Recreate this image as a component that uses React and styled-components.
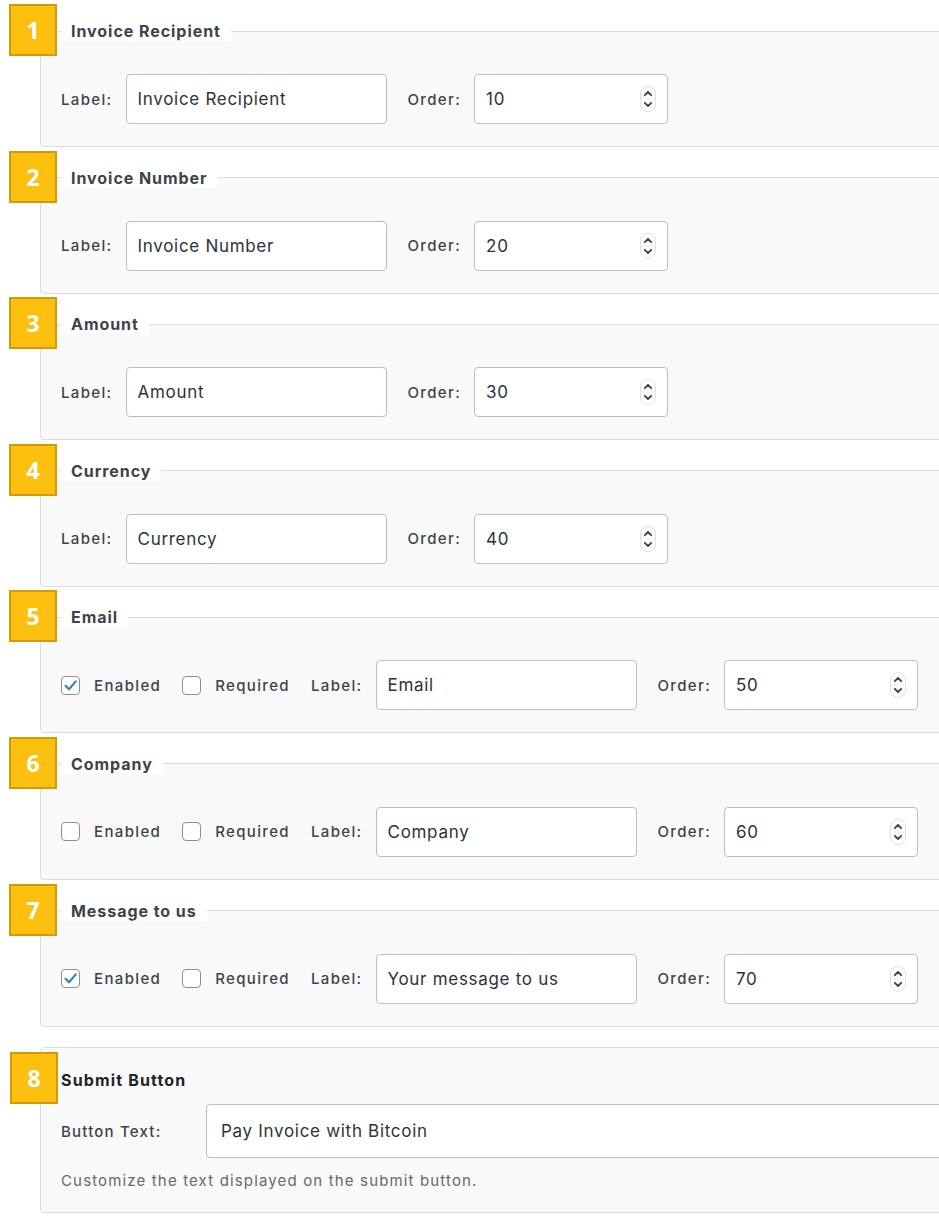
import React from 'react';
import styled, { createGlobalStyle } from 'styled-components';

const GlobalStyle = createGlobalStyle`
  html, body { margin: 0; padding: 0; background: #fff; overflow-x: hidden; }
  body {
    font-family: Inter, "Noto Sans", "Liberation Sans", sans-serif;
    color: #3c434a;
    -webkit-font-smoothing: antialiased;
  }
  * { box-sizing: border-box; }
`;

const Page = styled.div`
  padding: 21px 0 20px 40px;
  width: 939px;
`;

const Section = styled.div`
  position: relative;
  margin-right: -40px;
  margin-bottom: 20.6px;
`;

const Badge = styled.div`
  position: absolute;
  left: -31px;
  top: ${(p) => p.$top}px;
  width: 48px;
  height: 52px;
  background: #fdc00f;
  border: 2px solid #cf9c06;
  color: #fff;
  font-family: "Open Sans", "Noto Sans", sans-serif;
  font-weight: 700;
  font-size: 23px;
  display: flex;
  align-items: center;
  justify-content: center;
  z-index: 2;
`;

const Fieldset = styled.fieldset`
  margin: 0;
  min-width: 0;
  padding: 0 20px 22px;
  border: 1px solid #dcdcde;
  border-radius: 4px;
  background: #f9f9f9;
`;

const Legend = styled.legend`
  padding: 0 10px;
  margin: 0;
  background: #fff;
  font-size: 16px;
  font-weight: 700;
  letter-spacing: 0.95px;
  line-height: 20px;
  color: #3c434a;
`;

const Row = styled.div`
  display: flex;
  align-items: center;
  gap: 21px;
  height: 50px;
  margin-top: 33px;
`;

const Field = styled.label`
  display: flex;
  align-items: center;
  gap: ${(p) => p.$gap || 13}px;
`;

const LabelText = styled.span`
  font-size: 15px;
  font-weight: 500;
  letter-spacing: 1.35px;
  color: #3c434a;
  white-space: nowrap;
`;

const TextInput = styled.input`
  width: ${(p) => p.$w || 261}px;
  height: 50px;
  margin: 0;
  padding: 0 11px;
  border: 1px solid #bdbec2;
  border-radius: 4px;
  background: #fff;
  font-family: inherit;
  font-size: 17px;
  letter-spacing: 0.7px;
  color: #2c3338;
  outline: none;
`;

const NumberBox = styled.div`
  width: 194px;
  height: 50px;
  display: flex;
  align-items: center;
  justify-content: space-between;
  padding: 0 11px 0 11px;
  border: 1px solid #bdbec2;
  border-radius: 4px;
  background: #fff;
  font-size: 17px;
  letter-spacing: 0.7px;
  color: #2c3338;
`;

const Box = styled.div`
  position: relative;
  margin-right: -40px;
  padding: 22px 20px 21px;
  border: 1px solid #dcdcde;
  border-radius: 4px;
  background: #f9f9f9;
`;

const BoxTitle = styled.div`
  font-size: 16px;
  font-weight: 700;
  letter-spacing: 1.15px;
  line-height: 20px;
  color: #1d2327;
`;

const FormRow = styled.div`
  display: flex;
  align-items: center;
  margin-top: 14px;
`;

const FormLabel = styled.span`
  width: 145px;
  flex: none;
  font-size: 15px;
  font-weight: 500;
  letter-spacing: 1.2px;
  color: #3c434a;
`;

const WideInput = styled(TextInput)`
  flex: 1;
  width: auto;
  height: 54px;
  padding: 0 14px;
`;

const Description = styled.p`
  margin: 13px 0 0;
  font-size: 15px;
  letter-spacing: 1.15px;
  line-height: 20px;
  color: #646970;
`;

const CheckBox = styled.span`
  width: 19px;
  height: 19px;
  flex: none;
  border: 1px solid #8c8f94;
  border-radius: 4px;
  background: #fff;
  display: flex;
  align-items: center;
  justify-content: center;
`;

const Spinner = () => (
  <svg width="16" height="26" viewBox="0 0 16 26">
    <rect x="0.5" y="0.5" width="15" height="25" rx="7.5" fill="#fff" stroke="#e2e2e4" />
    <line x1="2" y1="13" x2="14" y2="13" stroke="#ececee" />
    <path d="M4.8 9.2 L8 6 L11.2 9.2" fill="none" stroke="#3c434a" strokeWidth="1.8" strokeLinecap="round" strokeLinejoin="round" />
    <path d="M4.8 16.8 L8 20 L11.2 16.8" fill="none" stroke="#3c434a" strokeWidth="1.8" strokeLinecap="round" strokeLinejoin="round" />
  </svg>
);

const Check = ({ checked }) => (
  <CheckBox>
    {checked && (
      <svg width="15" height="15" viewBox="0 0 15 15">
        <path d="M2.5 7.8 L6 11.2 L12.8 3.4" fill="none" stroke="#3582c4" strokeWidth="2.2" strokeLinecap="round" strokeLinejoin="round" />
      </svg>
    )}
  </CheckBox>
);

const OrderField = ({ value }) => (
  <Field>
    <LabelText>Order:</LabelText>
    <NumberBox>
      <span>{value}</span>
      <Spinner />
    </NumberBox>
  </Field>
);

const sections = [
  { title: 'Invoice Recipient', label: 'Invoice Recipient', order: 10 },
  { title: 'Invoice Number', label: 'Invoice Number', order: 20 },
  { title: 'Amount', label: 'Amount', order: 30 },
  { title: 'Currency', label: 'Currency', order: 40 },
  { title: 'Email', label: 'Email', order: 50, toggles: { enabled: true, required: false } },
  { title: 'Company', label: 'Company', order: 60, toggles: { enabled: false, required: false } },
  { title: 'Message to us', label: 'Your message to us', order: 70, toggles: { enabled: true, required: false } },
];

export default function App() {
  return (
    <>
      <GlobalStyle />
      <Page>
        {sections.map((s, i) => (
          <Section key={s.title}>
            <Badge $top={-17}>{i + 1}</Badge>
            <Fieldset>
              <Legend>{s.title}</Legend>
              <Row>
                {s.toggles && (
                  <>
                    <Field $gap={14}>
                      <Check checked={s.toggles.enabled} />
                      <LabelText>Enabled</LabelText>
                    </Field>
                    <Field $gap={14}>
                      <Check checked={s.toggles.required} />
                      <LabelText>Required</LabelText>
                    </Field>
                  </>
                )}
                <Field>
                  <LabelText>Label:</LabelText>
                  <TextInput defaultValue={s.label} />
                </Field>
                <OrderField value={s.order} />
              </Row>
            </Fieldset>
          </Section>
        ))}
        <Box>
          <Badge $top={4}>8</Badge>
          <BoxTitle>Submit Button</BoxTitle>
          <FormRow>
            <FormLabel>Button Text:</FormLabel>
            <WideInput defaultValue="Pay Invoice with Bitcoin" />
          </FormRow>
          <Description>Customize the text displayed on the submit button.</Description>
        </Box>
      </Page>
    </>
  );
}
